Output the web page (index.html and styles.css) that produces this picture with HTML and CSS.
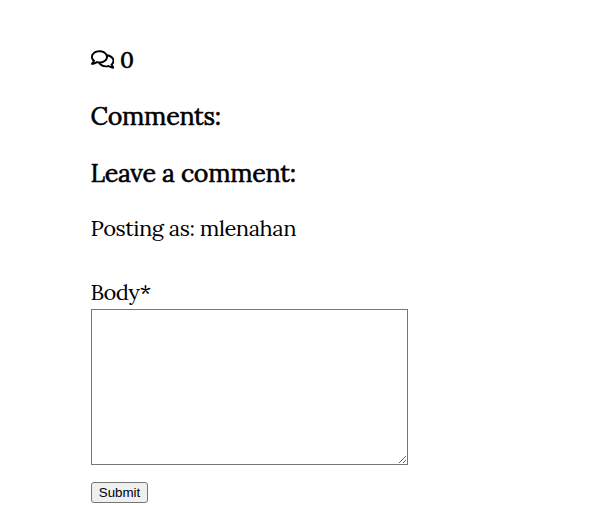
FILE: index.html
```html
<!DOCTYPE html>
<html lang="en">
<head>
<meta charset="utf-8">
<title>Comments</title>
<link rel="stylesheet" href="styles.css">
</head>
<body>
<main class="comments">
  <div class="count">
    <svg class="count-icon" viewBox="0 0 576 512" aria-hidden="true"><path d="M532 386.200c27.500-27.100 44-61.100 44-98.200 0-80-76.500-146.100-176.200-157.900C368.300 72.500 294.300 32 208 32 93.100 32 0 103.600 0 192c0 37 16.500 71 44 98.200-15.300 30.700-37.300 54.500-37.700 54.900-6.300 6.700-8.100 16.500-4.400 25 3.600 8.500 12 14 21.200 14 53.500 0 96.700-20.200 125.200-38.800 9.200 2.100 18.700 3.700 28.400 4.900C208.100 407.600 281.800 448 368 448c20.800 0 40.800-2.400 59.800-6.800C456.300 459.700 499.400 480 553 480c9.200 0 17.500-5.500 21.200-14 3.600-8.500 1.900-18.300-4.400-25-.4-.3-22.500-24.100-37.800-54.800zm-392.800-92.300L122.100 305c-14.100 9.100-28.500 16.300-43.100 21.400 2.700-4.700 5.400-9.700 8-14.800l15.500-31.100L77.700 256C64.200 242.600 48 220.700 48 192c0-60.700 73.300-112 160-112s160 51.300 160 112-73.300 112-160 112c-16.500 0-33-1.900-49-5.600l-19.800-4.500zM498.300 352l-24.700 24.400 15.500 31.100c2.600 5.100 5.300 10.100 8 14.800-14.600-5.100-29-12.300-43.100-21.400l-17.100-11.100-19.900 4.600c-16 3.700-32.500 5.600-49 5.600-54 0-102.200-20.100-131.300-49.700C338 339.500 416 272.900 416 192c0-3.400-.4-6.700-.7-10C479.700 196.500 528 238.800 528 288c0 28.700-16.200 50.600-29.700 64z"/></svg>
    <span>0</span>
  </div>
  <h2 class="heading">Comments:</h2>
  <h2 class="heading">Leave a comment:</h2>
  <p class="author">Posting as: mlenahan</p>
  <form class="form">
    <label class="label" for="body">Body*</label>
    <textarea class="body-field" id="body"></textarea>
    <button class="submit" type="button">Submit</button>
  </form>
</main>
</body>
</html>
```
FILE: styles.css
```css
body {
  margin: 0;
  background: #fff;
  color: #000;
  font-family: Lora, "Liberation Serif", serif;
  overflow: hidden;
}

.comments {
  padding: 45px 0 0 90.5px;
}

.count {
  display: flex;
  align-items: center;
  gap: 6px;
  height: 28px;
  font-size: 22.5px;
  -webkit-text-stroke: 0.6px #000;
}

.count-icon {
  width: 23.5px;
  height: 21px;
  stroke: none;
}

.heading {
  margin: 27px 0 0;
  font-size: 25px;
  line-height: 30px;
  font-weight: 400;
  letter-spacing: -0.28px;
  -webkit-text-stroke: 0.6px #000;
}

.count + .heading {
  margin-top: 28px;
}

.author {
  margin: 26px 0 0;
  font-size: 22px;
  line-height: 28px;
  letter-spacing: -0.48px;
}

.form {
  display: flex;
  flex-direction: column;
  align-items: flex-start;
  margin: 36px 0 0 0.5px;
}

.label {
  margin-left: -0.5px;
  font-size: 22px;
  line-height: 28px;
  letter-spacing: -0.6px;
}

.body-field {
  box-sizing: border-box;
  width: 317px;
  height: 156px;
  margin: 3px 0 17px;
  border: 1px solid #767676;
}

.submit {
  box-sizing: border-box;
  width: 57px;
  height: 21px;
  padding: 0;
  border: 1px solid #767676;
  border-radius: 3px;
  background: #efefef;
  color: #000;
  font: 13.333px "Liberation Sans", sans-serif;
}
```
